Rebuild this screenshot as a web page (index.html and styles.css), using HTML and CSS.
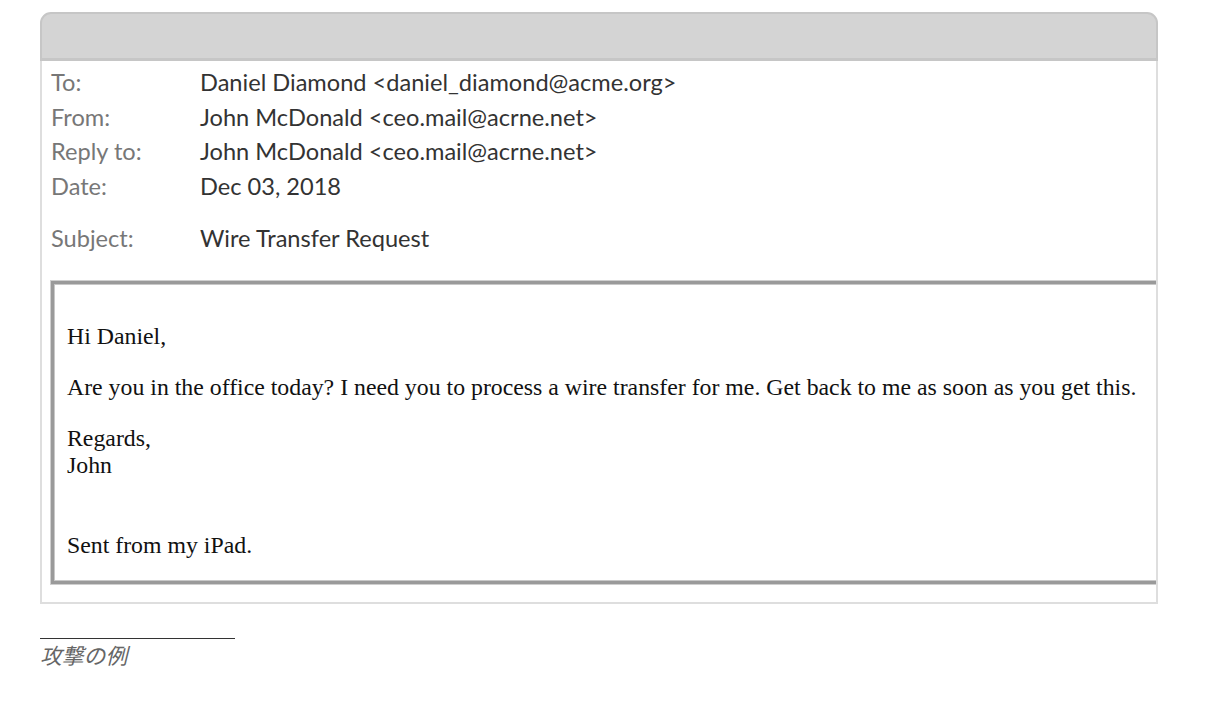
FILE: index.html
```html
<!DOCTYPE html>
<html>
<head>
<meta charset="utf-8">
<link rel="stylesheet" href="styles.css">
</head>
<body>
<div class="page">
  <div class="mail">
    <div class="mail-bar"></div>
    <div class="mail-body">
      <div class="headers">
        <div class="row"><span class="label">To:</span><span class="value">Daniel Diamond &lt;daniel_diamond@acme.org&gt;</span></div>
        <div class="row"><span class="label">From:</span><span class="value">John McDonald &lt;ceo.mail@acrne.net&gt;</span></div>
        <div class="row"><span class="label">Reply to:</span><span class="value">John McDonald &lt;ceo.mail@acrne.net&gt;</span></div>
        <div class="row"><span class="label">Date:</span><span class="value">Dec 03, 2018</span></div>
        <div class="row subject"><span class="label">Subject:</span><span class="value">Wire Transfer Request</span></div>
      </div>
      <div class="message">
        <p>Hi Daniel,</p>
        <p>Are you in the office today? I need you to process a wire transfer for me. Get back to me as soon as you get this.</p>
        <p>Regards,<br>John</p>
        <p class="sent">Sent from my iPad.</p>
      </div>
    </div>
  </div>
  <div class="caption">
    <div class="rule"></div>
    <div class="caption-text">攻撃の例</div>
  </div>
</div>
</body>
</html>
```
FILE: styles.css
```css
html, body {
  margin: 0;
  padding: 0;
  background: #fff;
}
.page {
  padding: 12px 0 0 40px;
  width: 1118px;
}
.mail {
  width: 1118px;
}
.mail-bar {
  height: 44px;
  background: #d4d4d4;
  border: 2px solid #c6c6c6;
  border-bottom-width: 3px;
  border-radius: 11px 11px 0 0;
  box-sizing: content-box;
  width: 1114px;
}
.mail-body {
  border: 2px solid #dedede;
  border-top: none;
  overflow: hidden;
  padding: 4px 0 18px 9px;
}
.headers {
  font-family: Lato, "Open Sans", sans-serif;
  font-size: 23.6px;
}
.row {
  display: flex;
  height: 34.5px;
  line-height: 34.5px;
}
.row.subject {
  margin-top: 17.5px;
}
.label {
  width: 149px;
  color: #777;
  flex: none;
}
.value {
  color: #333;
}
.message {
  margin-top: 26px;
  width: 1130px;
  border: 3px solid #9a9a9a;
  box-shadow: inset 0 0 0 1px #c8c8c8, 0 0 0 1px #cfcfcf;
  padding: 15px 13px 0 13px;
  font-family: "Liberation Serif", "Times New Roman", serif;
  font-size: 23.8px;
  line-height: 27px;
  color: #111;
}
.message p {
  margin: 24px 0;
}
.message p.sent {
  margin-top: 53px;
  margin-bottom: 0;
  padding-bottom: 22px;
}
.caption {
  margin-top: 34px;
}
.rule {
  width: 195px;
  height: 1px;
  background: #333;
}
.caption-text {
  font-family: "Noto Sans CJK JP", sans-serif;
  font-style: italic;
  font-size: 21.8px;
  color: #666;
  line-height: 32px;
  margin-top: 0;
}
```
